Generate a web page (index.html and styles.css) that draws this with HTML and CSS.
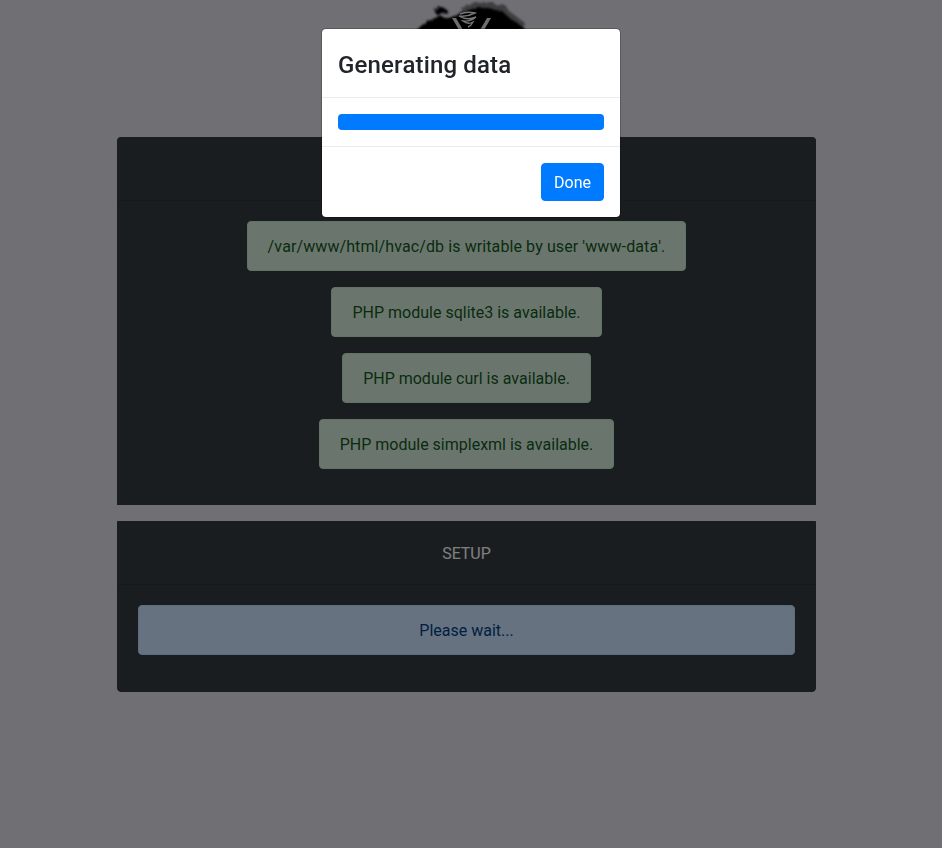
FILE: index.html
```html
<!DOCTYPE html>
<html lang="en">
<head>
<meta charset="utf-8">
<title>Setup</title>
<link rel="stylesheet" href="styles.css">
</head>
<body>
<div class="page">
  <div class="logo">
    <svg class="logo-svg" width="130" height="121" viewBox="0 0 130 121" aria-hidden="true">
      <defs>
        <filter id="rough" x="-10%" y="-10%" width="120%" height="120%">
          <feTurbulence type="fractalNoise" baseFrequency="0.2" numOctaves="2" seed="4" result="n"/>
          <feDisplacementMap in="SourceGraphic" in2="n" scale="4" result="d"/>
          <feGaussianBlur in="d" stdDeviation="1.1"/>
        </filter>
        <filter id="soft"><feGaussianBlur stdDeviation="0.5"/></filter>
      </defs>
      <g filter="url(#rough)">
        <path class="logo-halo" d="M57 8 L64 5 L70 2 L78 3 L86 2 L92 5 L100 5 L104 11 L112 17 L120 23 L118 30 L60 30 Z"/>
        <path class="logo-blob" d="M10 40 L12 30 L16 26 L21 22 L28 19 L33 16 L38 17 L44 18 L52 15 L57 12 L64 10 L70 8 L76 8 L84 8 L90 10 L97 11 L101 15 L106 19 L111 22 L116 26 L121 30 L124 40 L124 70 L65 120 L10 70 Z"/>
        <path class="logo-blob" d="M29 10 L34 7 L41 9 L43 12 L38 14 L31 14 Z"/>
      </g>
      <g filter="url(#soft)">
        <path class="logo-swirl" d="M55 14 Q62 11 70 13 Q62 17 54 16 Q62 21 71 17 Q65 22 58 21 Q63 25 68 22 Q66 26 63 27"/>
        <path class="logo-horn" d="M47 18 L54 30 L58 30 L51 18 Z"/>
        <path class="logo-horn" d="M82 18 L75 30 L79 30 L86 18 Z"/>
      </g>
    </svg>
  </div>
  <section class="card card-first">
    <header class="card-header">REQUIREMENTS</header>
    <div class="card-body">
      <div class="alert alert-success alert-path">/var/www/html/hvac/db is writable by user 'www-data'.</div>
      <div class="alert alert-success">PHP module sqlite3 is available.</div>
      <div class="alert alert-success">PHP module curl is available.</div>
      <div class="alert alert-success">PHP module simplexml is available.</div>
    </div>
  </section>
  <section class="card card-last">
    <header class="card-header">SETUP</header>
    <div class="card-body">
      <div class="alert alert-primary alert-block">Please wait...</div>
    </div>
  </section>
</div>
<div class="backdrop"></div>
<div class="modal">
  <div class="modal-header"><h5 class="modal-title">Generating data</h5></div>
  <div class="modal-body">
    <div class="progress"><div class="progress-bar"></div></div>
  </div>
  <div class="modal-footer"><button class="btn" type="button">Done</button></div>
</div>
</body>
</html>
```
FILE: styles.css
```css
* { box-sizing: border-box; }
html, body { margin: 0; height: 100%; }
body {
  background: #e1dfe9;
  color: #212529;
  font-family: Roboto, "Liberation Sans", sans-serif;
  font-size: 16px;
  line-height: 24px;
  font-kerning: none;
  overflow: hidden;
}
.page {
  width: 699px;
  margin-left: 117px;
}
.logo {
  height: 121px;
  display: flex;
  justify-content: center;
}
.logo-svg { display: block; margin-left: 7px; }
.logo-blob { fill: #000; }
.logo-halo { fill: #000; opacity: .45; }
.logo-swirl { fill: none; stroke: #eee; stroke-width: 1.4; }
.logo-horn { fill: #ddd; }
.card {
  margin-top: 16px;
  background: #343a40;
  border: 1px solid #343a40;
  color: #fff;
}
.card-first { border-radius: 4px 4px 0 0; border-bottom: 0; }
.card-last { border-radius: 0 0 4px 4px; }
.card-header {
  padding: 20px 20px 18px;
  text-align: center;
  border-bottom: 1px solid rgba(0, 0, 0, .125);
}
.card-body {
  padding: 20px;
  display: flex;
  flex-direction: column;
  align-items: center;
}
.alert {
  padding: 13px 20px 11px;
  margin-bottom: 16px;
  border: 1px solid transparent;
  border-radius: 4px;
}
.alert-path { letter-spacing: .096px; }
.alert-block { align-self: stretch; text-align: center; }
.alert-success { color: #155724; background: #d4edda; border-color: #c3e6cb; }
.alert-primary { color: #004085; background: #cce5ff; border-color: #b8daff; }
.backdrop {
  position: fixed;
  inset: 0;
  background: rgba(0, 0, 0, .5);
}
.modal {
  position: fixed;
  top: 28px;
  left: 321px;
  width: 300px;
  background: #fff;
  border: 1px solid rgba(0, 0, 0, .2);
  background-clip: padding-box;
  border-radius: 5px;
}
.modal-header {
  padding: 18px 16px 14px;
  border-bottom: 1px solid #e9ecef;
}
.modal-title {
  margin: 0;
  font-size: 24px;
  line-height: 36px;
  font-weight: 500;
  letter-spacing: .13px;
}
.modal-body {
  padding: 16px;
  border-bottom: 1px solid #e9ecef;
}
.progress {
  height: 16px;
  border-radius: 4px;
  background: #e9ecef;
  overflow: hidden;
}
.progress-bar {
  width: 100%;
  height: 100%;
  background: #007bff;
}
.modal-footer {
  padding: 16px;
  display: flex;
  justify-content: flex-end;
}
.btn {
  padding: 7px 12px 5px;
  background: #007bff;
  color: #fff;
  border: 1px solid #007bff;
  border-radius: 4px;
  font: inherit;
}
```
